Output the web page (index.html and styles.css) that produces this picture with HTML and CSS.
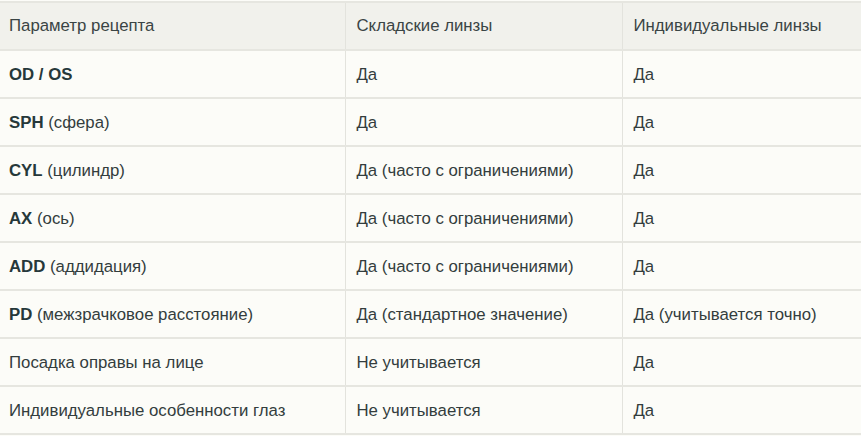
FILE: index.html
```html
<!DOCTYPE html>
<html lang="ru">
<head>
<meta charset="utf-8">
<link rel="stylesheet" href="styles.css">
</head>
<body>
<table class="rx">
  <colgroup>
    <col class="c1"><col class="c2"><col class="c3">
  </colgroup>
  <thead>
    <tr><th>Параметр рецепта</th><th>Складские линзы</th><th>Индивидуальные линзы</th></tr>
  </thead>
  <tbody>
    <tr><td><b>OD / OS</b></td><td>Да</td><td>Да</td></tr>
    <tr><td><b>SPH</b> (сфера)</td><td>Да</td><td>Да</td></tr>
    <tr><td><b>CYL</b> (цилиндр)</td><td>Да (часто с ограничениями)</td><td>Да</td></tr>
    <tr><td><b>AX</b> (ось)</td><td>Да (часто с ограничениями)</td><td>Да</td></tr>
    <tr><td><b>ADD</b> (аддидация)</td><td>Да (часто с ограничениями)</td><td>Да</td></tr>
    <tr><td><b>PD</b> (межзрачковое расстояние)</td><td>Да (стандартное значение)</td><td>Да (учитывается точно)</td></tr>
    <tr><td>Посадка оправы на лице</td><td>Не учитывается</td><td>Да</td></tr>
    <tr><td>Индивидуальные особенности глаз</td><td>Не учитывается</td><td>Да</td></tr>
  </tbody>
</table>
</body>
</html>
```
FILE: styles.css
```css
html, body {
  margin: 0;
  padding: 0;
  background: #fcfcf8;
  overflow: hidden;
}
.rx {
  border-collapse: collapse;
  width: 900px;
  table-layout: fixed;
  margin-top: 1px;
  font-family: "Liberation Sans", Arial, sans-serif;
  font-size: 16.8px;
  color: #333d3d;
}
.rx .c1 { width: 345px; }
.rx .c2 { width: 277px; }
.rx .c3 { width: 278px; }
.rx th, .rx td {
  text-align: left;
  font-weight: normal;
  padding: 0 9px 0 11px;
  height: 46px;
  border-top: 2px solid #e6e6e0;
  border-bottom: 2px solid #e6e6e0;
  border-left: 1px solid #e3e3dd;
  border-right: 1px solid #e3e3dd;
  vertical-align: middle;
  white-space: nowrap;
}
.rx td { padding-top: 2px; height: 44px; }
.rx th:first-child, .rx td:first-child { border-left: none; padding-left: 9px; }
.rx thead th { background: #f1f1ec; color: #3a4444; }
.rx td { background: #fcfcf8; }
.rx b { font-weight: bold; color: #26383a; }
```
